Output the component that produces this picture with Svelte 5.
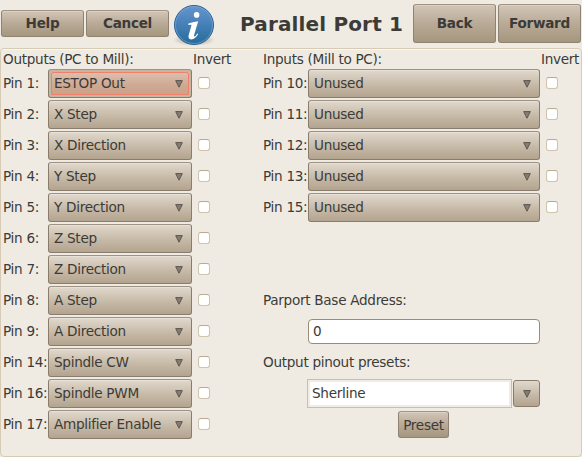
<script>
  const outputs = [
    ['Pin 1:', 'ESTOP Out'],
    ['Pin 2:', 'X Step'],
    ['Pin 3:', 'X Direction'],
    ['Pin 4:', 'Y Step'],
    ['Pin 5:', 'Y Direction'],
    ['Pin 6:', 'Z Step'],
    ['Pin 7:', 'Z Direction'],
    ['Pin 8:', 'A Step'],
    ['Pin 9:', 'A Direction'],
    ['Pin 14:', 'Spindle CW'],
    ['Pin 16:', 'Spindle PWM'],
    ['Pin 17:', 'Amplifier Enable']
  ];
  const inputs = ['Pin 10:', 'Pin 11:', 'Pin 12:', 'Pin 13:', 'Pin 15:'];
</script>

{#snippet arrow()}
  <svg class="arrow" width="8" height="8" viewBox="0 0 8 8">
    <path d="M.7 .6H7.3L4 7.2Z" fill="#857d72" stroke="#5c574f" stroke-width="1" />
  </svg>
{/snippet}

{#snippet pin(label, value, focused)}
  <div class="row">
    <span class="label">{label}</span>
    <button class="combo" class:focused><span>{value}</span>{@render arrow()}</button>
    <span class="check" role="checkbox" aria-checked="false" aria-label="Invert" tabindex="0"></span>
  </div>
{/snippet}

<div class="window">
  <header>
    <button class="btn">Help</button>
    <button class="btn">Cancel</button>
    <svg class="info" width="44" height="46" viewBox="0 0 44 46">
      <defs>
        <linearGradient id="disc" x1="0" y1="0" x2="0" y2="1">
          <stop offset="0" stop-color="#6795cf" />
          <stop offset=".5" stop-color="#4480b6" />
          <stop offset="1" stop-color="#286a9b" />
        </linearGradient>
        <radialGradient id="shade">
          <stop offset="0" stop-color="#675d50" stop-opacity=".65" />
          <stop offset="1" stop-color="#675d50" stop-opacity="0" />
        </radialGradient>
      </defs>
      <ellipse cx="22" cy="40" rx="21" ry="6" fill="url(#shade)" />
      <circle cx="22" cy="25" r="19.5" fill="url(#disc)" stroke="#286295" />
      <circle cx="22" cy="25" r="18.5" fill="none" stroke="#83aeda" stroke-opacity=".55" />
      <circle cx="24.6" cy="14.9" r="2.8" fill="#fff" />
      <path d="M16.4 23.6Q20.5 22.1 26.2 21.3L22.2 34.8Q21.6 37 22.5 36.5Q23.8 35.9 25.3 33.4L26.2 34.1Q23.2 39.4 19.2 39.4Q15.6 39 16.7 35.1L19.3 26.1Q19.8 24.5 18.7 24.7L16.3 24.9Z" fill="#fff" />
    </svg>
    <h1>Parallel Port 1</h1>
    <button class="btn tall">Back</button>
    <button class="btn tall">Forward</button>
  </header>

  <main>
    <section class="outputs">
      <div class="heading"><span>Outputs (PC to Mill):</span><span>Invert</span></div>
      {#each outputs as [label, value], i}
        {@render pin(label, value, i === 0)}
      {/each}
    </section>

    <section class="inputs">
      <div class="heading"><span>Inputs (Mill to PC):</span><span>Invert</span></div>
      {#each inputs as label}
        {@render pin(label, 'Unused', false)}
      {/each}
      <div class="caption address">Parport Base Address:</div>
      <input class="entry" value="0" aria-label="Parport Base Address" />
      <div class="caption presets">Output pinout presets:</div>
      <div class="picker">
        <div class="choice"><span>Sherline</span></div>
        <button class="drop" aria-label="Choose preset">{@render arrow()}</button>
      </div>
      <button class="btn preset">Preset</button>
    </section>
  </main>
</div>

<style>
  :global(body) {
    margin: 0;
    background: #efebe3;
  }
  .window {
    width: 582px;
    height: 457px;
    overflow: hidden;
    display: flex;
    flex-direction: column;
    font: 13.6px/16px 'DejaVu Sans', sans-serif;
    letter-spacing: -0.3px;
    color: #3c3b37;
    background: #efebe3;
  }
  .window * {
    box-sizing: border-box;
  }
  button,
  input {
    font: inherit;
    letter-spacing: inherit;
    color: inherit;
    margin: 0;
    padding: 0;
    outline: none;
  }
  header {
    display: flex;
    align-items: center;
    height: 48px;
    padding: 0 1px;
    flex: none;
    gap: 2px;
  }
  .btn {
    width: 83px;
    height: 27px;
    flex: none;
    border: 1px solid #8f8270;
    border-top-color: #a09483;
    border-radius: 3px;
    background: linear-gradient(#d2c6b7, #baab98 48%, #a5967f);
    box-shadow: inset 0 1px #dbd1c4;
    font-weight: bold;
  }
  header .btn {
    margin-bottom: 1px;
    padding-bottom: 1px;
  }
  header .btn.tall {
    height: 39px;
  }
  .info {
    flex: none;
    margin-left: 1px;
    margin-bottom: 2px;
  }
  h1 {
    flex: 1;
    margin: 0;
    padding-left: 22px;
    font-size: 20px;
    line-height: 24px;
    letter-spacing: 0.15px;
    white-space: nowrap;
  }
  main {
    flex: none;
    height: 409px;
    display: flex;
    border: 1px solid #d6ccb6;
    border-radius: 4px;
    box-shadow: inset 0 1px #f9f7f2;
    padding: 2px 0 0 2px;
  }
  .outputs {
    width: 260px;
    flex: none;
  }
  .inputs {
    width: 319px;
    flex: none;
  }
  .heading {
    height: 18px;
    display: flex;
    white-space: nowrap;
  }
  .heading span:first-child {
    width: 190px;
  }
  .inputs .heading span:first-child {
    width: 278px;
  }
  .row {
    display: flex;
    align-items: center;
    height: 29px;
    margin-bottom: 2px;
  }
  .label {
    width: 45px;
    flex: none;
    padding-bottom: 1px;
    white-space: nowrap;
  }
  .combo {
    width: 144px;
    height: 29px;
    display: flex;
    align-items: center;
    justify-content: space-between;
    padding: 0 8px 0 5px;
    border: 1px solid #897c6c;
    border-top-color: #9d9283;
    border-radius: 3px;
    background: linear-gradient(#e1d9cd, #c6b9a7 55%, #b3a48f);
    box-shadow: inset 0 1px #e8e1d8;
    white-space: nowrap;
  }
  .combo span {
    padding-bottom: 1px;
  }
  .combo.focused {
    position: relative;
    background: linear-gradient(#dfc4b5, #cfa993 55%, #c9a08a);
    box-shadow: inset 0 0 0 2px #c5b5a2;
  }
  .combo.focused::after {
    content: '';
    position: absolute;
    inset: 2px;
    border: 1px solid #f08067;
    border-radius: 2px;
  }
  .inputs .combo {
    width: 232px;
  }
  .check {
    width: 12px;
    height: 12px;
    margin: 0 0 1px 6px;
    border: 1px solid #cfc3ad;
    border-top-color: #b9aa93;
    border-radius: 3px;
    background: #fff;
  }
  .caption {
    height: 16px;
    white-space: nowrap;
  }
  .address {
    margin-top: 70px;
  }
  .entry {
    display: block;
    width: 232px;
    height: 25px;
    margin: 11px 0 0 45px;
    padding: 0 4px 1px;
    border: 1px solid #9b8c72;
    border-radius: 4px;
    background: #fff;
  }
  .presets {
    margin-top: 10px;
  }
  .picker {
    display: flex;
    align-items: center;
    margin: 9px 0 0 44px;
    gap: 1px;
  }
  .choice {
    width: 205px;
    height: 29px;
    padding: 5px 4px;
    border: 1px solid #ccbea7;
    background: #fff;
    box-shadow: inset 0 0 0 2px #f0ece5;
  }
  .drop {
    width: 27px;
    height: 27px;
    display: flex;
    align-items: center;
    justify-content: center;
    border: 1px solid #897c6c;
    border-radius: 3px;
    background: linear-gradient(#e1d9cd, #c6b9a7 55%, #b3a48f);
  }
  .arrow {
    flex: none;
  }
  .preset {
    display: block;
    width: 51px;
    margin: 3px 0 0 135px;
    font-weight: normal;
  }
</style>
